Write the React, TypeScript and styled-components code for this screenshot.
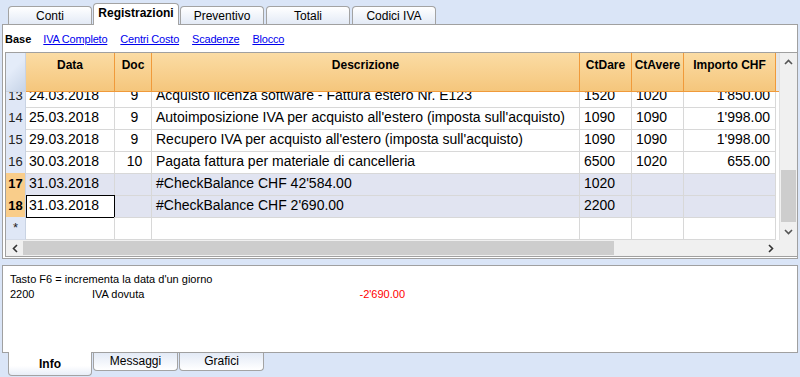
import React from 'react';
import styled, { createGlobalStyle, css } from 'styled-components';

const GlobalStyle = createGlobalStyle`
    html, body {
        margin: 0;
        padding: 0;
        background: #dae5f7;
    }
    body {
        font-family: "Liberation Sans", Arial, sans-serif;
        color: #000;
    }
`;

type Row = {
    n: string;
    date: string;
    doc: string;
    desc: string;
    dare: string;
    avere: string;
    amount: string;
    special?: boolean;
    editing?: boolean;
};

const rows: Row[] = [
    { n: '13', date: '24.03.2018', doc: '9', desc: 'Acquisto licenza software - Fattura estero Nr. E123', dare: '1520', avere: '1020', amount: "1'850.00" },
    { n: '14', date: '25.03.2018', doc: '9', desc: "Autoimposizione IVA per acquisto all'estero (imposta sull'acquisto)", dare: '1090', avere: '1090', amount: "1'998.00" },
    { n: '15', date: '29.03.2018', doc: '9', desc: "Recupero IVA per acquisto all'estero (imposta sull'acquisto)", dare: '1090', avere: '1090', amount: "1'998.00" },
    { n: '16', date: '30.03.2018', doc: '10', desc: 'Pagata fattura per materiale di cancelleria', dare: '6500', avere: '1020', amount: '655.00' },
    { n: '17', date: '31.03.2018', doc: '', desc: "#CheckBalance CHF 42'584.00", dare: '1020', avere: '', amount: '', special: true },
    { n: '18', date: '31.03.2018', doc: '', desc: "#CheckBalance CHF 2'690.00", dare: '2200', avere: '', amount: '', special: true, editing: true },
    { n: '*', date: '', doc: '', desc: '', dare: '', avere: '', amount: '' },
];

const COLS = '20px 89px 37px 428px 52px 52px 92px 1fr';

const App = () => {
    return (
        <Page>
            <GlobalStyle />
            <TopTabs>
                {['Conti', 'Registrazioni', 'Preventivo', 'Totali', 'Codici IVA'].map((t) => (
                    <TopTab key={t} $active={t === 'Registrazioni'}>{t}</TopTab>
                ))}
            </TopTabs>

            <MainPanel>
                <SubTabs>
                    <SubActive>Base</SubActive>
                    <SubLink>IVA Completo</SubLink>
                    <SubLink>Centri Costo</SubLink>
                    <SubLink>Scadenze</SubLink>
                    <SubLink>Blocco</SubLink>
                </SubTabs>

                <GridFrame>
                    <GridTop>
                        <TableArea>
                            <HeaderRow>
                                <CornerCell />
                                <HeadCell>Data</HeadCell>
                                <HeadCell>Doc</HeadCell>
                                <HeadCell>Descrizione</HeadCell>
                                <HeadCell>CtDare</HeadCell>
                                <HeadCell>CtAvere</HeadCell>
                                <HeadCell>Importo CHF</HeadCell>
                                <HeadFiller />
                            </HeaderRow>
                            <Body>
                                <BodyInner>
                                    {rows.map((r) => (
                                        <DataRow key={r.n} $special={r.special}>
                                            <RowNum $special={r.special}>{r.n}</RowNum>
                                            <Cell $editing={r.editing}>{r.date}</Cell>
                                            <Cell $align="center">{r.doc}</Cell>
                                            <Cell $pad={4}>{r.desc}</Cell>
                                            <Cell $pad={4}>{r.dare}</Cell>
                                            <Cell $pad={4}>{r.avere}</Cell>
                                            <Cell $align="right">{r.amount}</Cell>
                                            <Filler />
                                        </DataRow>
                                    ))}
                                </BodyInner>
                            </Body>
                        </TableArea>
                        <VScroll>
                            <Arrow>
                                <svg width="9" height="6" viewBox="0 0 9 6"><path d="M1 5 L4.5 1.5 L8 5" stroke="#555" strokeWidth="1.6" fill="none" /></svg>
                            </Arrow>
                            <VTrack>
                                <VThumb />
                            </VTrack>
                            <Arrow>
                                <svg width="9" height="6" viewBox="0 0 9 6"><path d="M1 1 L4.5 4.5 L8 1" stroke="#555" strokeWidth="1.6" fill="none" /></svg>
                            </Arrow>
                        </VScroll>
                    </GridTop>
                    <HScrollRow>
                        <HScroll>
                            <HArrow>
                                <svg width="6" height="9" viewBox="0 0 6 9"><path d="M5 1 L1.5 4.5 L5 8" stroke="#333" strokeWidth="1.6" fill="none" /></svg>
                            </HArrow>
                            <HTrack>
                                <HThumb />
                            </HTrack>
                            <HArrow>
                                <svg width="6" height="9" viewBox="0 0 6 9"><path d="M1 1 L4.5 4.5 L1 8" stroke="#333" strokeWidth="1.6" fill="none" /></svg>
                            </HArrow>
                        </HScroll>
                        <ScrollCorner />
                    </HScrollRow>
                </GridFrame>
            </MainPanel>

            <InfoPanel>
                <InfoLine>Tasto F6 = incrementa la data d'un giorno</InfoLine>
                <InfoLine>
                    <InfoAcc>2200</InfoAcc>
                    <InfoDesc>IVA dovuta</InfoDesc>
                    <InfoAmount>-2'690.00</InfoAmount>
                </InfoLine>
            </InfoPanel>

            <BottomTabs>
                {['Info', 'Messaggi', 'Grafici'].map((t) => (
                    <BottomTab key={t} $active={t === 'Info'}>{t}</BottomTab>
                ))}
            </BottomTabs>
        </Page>
    );
};

export default App;

const Page = styled.div`
    width: 800px;
    height: 377px;
    background: #dae5f7;
    overflow: hidden;
    font-family: "Liberation Sans", Arial, sans-serif;
`;

const TopTabs = styled.div`
    height: 24px;
    display: flex;
    align-items: flex-end;
    padding-left: 8px;
    position: relative;
    z-index: 1;
`;

const TopTab = styled.div<{ $active?: boolean }>`
    width: 84px;
    margin-right: 2px;
    height: 18px;
    box-sizing: border-box;
    border: 1px solid #a3a3a3;
    border-bottom: none;
    border-radius: 4px 4px 0 0;
    background: linear-gradient(#ffffff, #e3eaf6);
    font-size: 12px;
    text-align: center;
    line-height: 18px;
    color: #000;
    ${(p) =>
        p.$active &&
        css`
            height: 22px;
            margin-bottom: -1px;
            background: #ffffff;
            font-weight: bold;
            line-height: 19px;
            margin-left: -1px;
            margin-right: 1px;
            width: 86px;
        `}
`;

const MainPanel = styled.div`
    margin: 0 2px;
    height: 235px;
    box-sizing: border-box;
    border: 1px solid #a0a0a0;
    background: #ffffff;
    display: flex;
    flex-direction: column;
`;

const SubTabs = styled.div`
    height: 27px;
    display: flex;
    align-items: center;
    gap: 13px;
    padding-left: 2px;
    font-size: 11px;
    letter-spacing: -0.2px;
`;

const SubActive = styled.span`
    font-weight: bold;
    letter-spacing: 0;
    margin-right: -1px;
`;

const SubLink = styled.span`
    color: #0000ee;
    text-decoration: underline;
`;

const GridFrame = styled.div`
    margin: 0 0 0 2px;
    width: 792px;
    height: 205px;
    box-sizing: border-box;
    border: 1px solid #a0a0a0;
    border-right: none;
    display: flex;
    flex-direction: column;
`;

const GridTop = styled.div`
    display: flex;
    height: 187px;
`;

const TableArea = styled.div`
    flex: 1;
    display: flex;
    flex-direction: column;
    overflow: hidden;
`;

const HeaderRow = styled.div`
    display: grid;
    grid-template-columns: ${COLS};
    height: 39px;
    flex-shrink: 0;
`;

const CornerCell = styled.div`
    background: linear-gradient(135deg, #e4ecf9 40%, #c7d4e8 100%);
    border-right: 1px solid #c9d3e3;
    border-bottom: 1px solid #c9d3e3;
`;

const HeadCell = styled.div`
    background: linear-gradient(#fbdca4, #f5c67c);
    border-right: 1px solid #f09a3a;
    border-bottom: 1px solid #f09a3a;
    font-size: 12px;
    font-weight: bold;
    text-align: center;
    padding-top: 5px;
    box-sizing: border-box;
    white-space: nowrap;
    overflow: hidden;
`;

const HeadFiller = styled.div`
    background: #e6e6e6;
    border-bottom: 1px solid #f09a3a;
`;

const Body = styled.div`
    flex: 1;
    overflow: hidden;
`;

const BodyInner = styled.div`
    margin-top: -7px;
`;

const DataRow = styled.div<{ $special?: boolean }>`
    display: grid;
    grid-template-columns: ${COLS};
    height: 22px;
    background: ${(p) => (p.$special ? '#e1e4f1' : '#ffffff')};
`;

const RowNum = styled.div<{ $special?: boolean }>`
    background: ${(p) => (p.$special ? '#f9cd8a' : '#dfe7f6')};
    border-right: 1px solid #c9d3e3;
    border-bottom: 1px solid #d4dbe8;
    font-size: 13px;
    font-weight: ${(p) => (p.$special ? 'bold' : 'normal')};
    color: ${(p) => (p.$special ? '#000' : '#222')};
    line-height: 22px;
    text-align: center;
    box-sizing: border-box;
`;

const Cell = styled.div<{ $align?: 'left' | 'center' | 'right'; $pad?: number; $editing?: boolean }>`
    font-size: 14px;
    line-height: 21px;
    text-align: ${(p) => p.$align || 'left'};
    padding: 0 ${(p) => (p.$align === 'right' ? 5 : 0)}px 0 ${(p) => p.$pad ?? 3}px;
    border-right: 1px solid #d8d8d8;
    border-bottom: 1px solid #d8d8d8;
    box-sizing: border-box;
    white-space: nowrap;
    overflow: hidden;
    ${(p) =>
        p.$editing &&
        css`
            background: #ffffff;
            outline: 1px solid #000;
            outline-offset: -1px;
            padding-left: 3px;
        `}
`;

const Filler = styled.div`
    background: #ffffff;
`;

const VScroll = styled.div`
    width: 17px;
    background: #f0f0f0;
    border-left: 1px solid #e0e0e0;
    display: flex;
    flex-direction: column;
`;

const Arrow = styled.div`
    height: 17px;
    display: flex;
    align-items: center;
    justify-content: center;
`;

const VTrack = styled.div`
    flex: 1;
    display: flex;
    flex-direction: column;
    justify-content: flex-end;
    padding: 0 1px 1px;
`;

const VThumb = styled.div`
    height: 52px;
    background: #cdcdcd;
`;

const HScrollRow = styled.div`
    display: flex;
    height: 16px;
`;

const HScroll = styled.div`
    flex: 1;
    display: flex;
    background: #f0f0f0;
`;

const HArrow = styled.div`
    width: 17px;
    display: flex;
    align-items: center;
    justify-content: center;
`;

const HTrack = styled.div`
    flex: 1;
    display: flex;
    padding: 1px 0;
`;

const HThumb = styled.div`
    width: 591px;
    background: #cdcdcd;
`;

const ScrollCorner = styled.div`
    width: 18px;
    background: #f0f0f0;
`;

const InfoPanel = styled.div`
    margin: 6px 2px 0;
    height: 88px;
    box-sizing: border-box;
    border: 1px solid #a0a0a0;
    background: #ffffff;
    padding: 6px 0 0 7px;
    font-size: 11px;
    position: relative;
    z-index: 0;
`;

const InfoLine = styled.div`
    display: flex;
    height: 15px;
    line-height: 15px;
    white-space: nowrap;
`;

const InfoAcc = styled.span`
    width: 82px;
`;

const InfoDesc = styled.span`
    width: 229px;
`;

const InfoAmount = styled.span`
    width: 84px;
    text-align: right;
    color: #ff0000;
`;

const BottomTabs = styled.div`
    display: flex;
    align-items: flex-start;
    padding-left: 8px;
    position: relative;
    z-index: 1;
`;

const BottomTab = styled.div<{ $active?: boolean }>`
    width: 85px;
    margin-right: 1px;
    height: 18px;
    box-sizing: border-box;
    border: 1px solid #a3a3a3;
    border-top: none;
    border-radius: 0 0 4px 4px;
    background: linear-gradient(#e3eaf6, #ffffff);
    font-size: 12px;
    text-align: center;
    line-height: 16px;
    ${(p) =>
        p.$active &&
        css`
            height: 24px;
            margin-top: -1px;
            background: linear-gradient(#ffffff 60%, #e8eef8);
            font-weight: bold;
            line-height: 24px;
            width: 84px;
        `}
`;
